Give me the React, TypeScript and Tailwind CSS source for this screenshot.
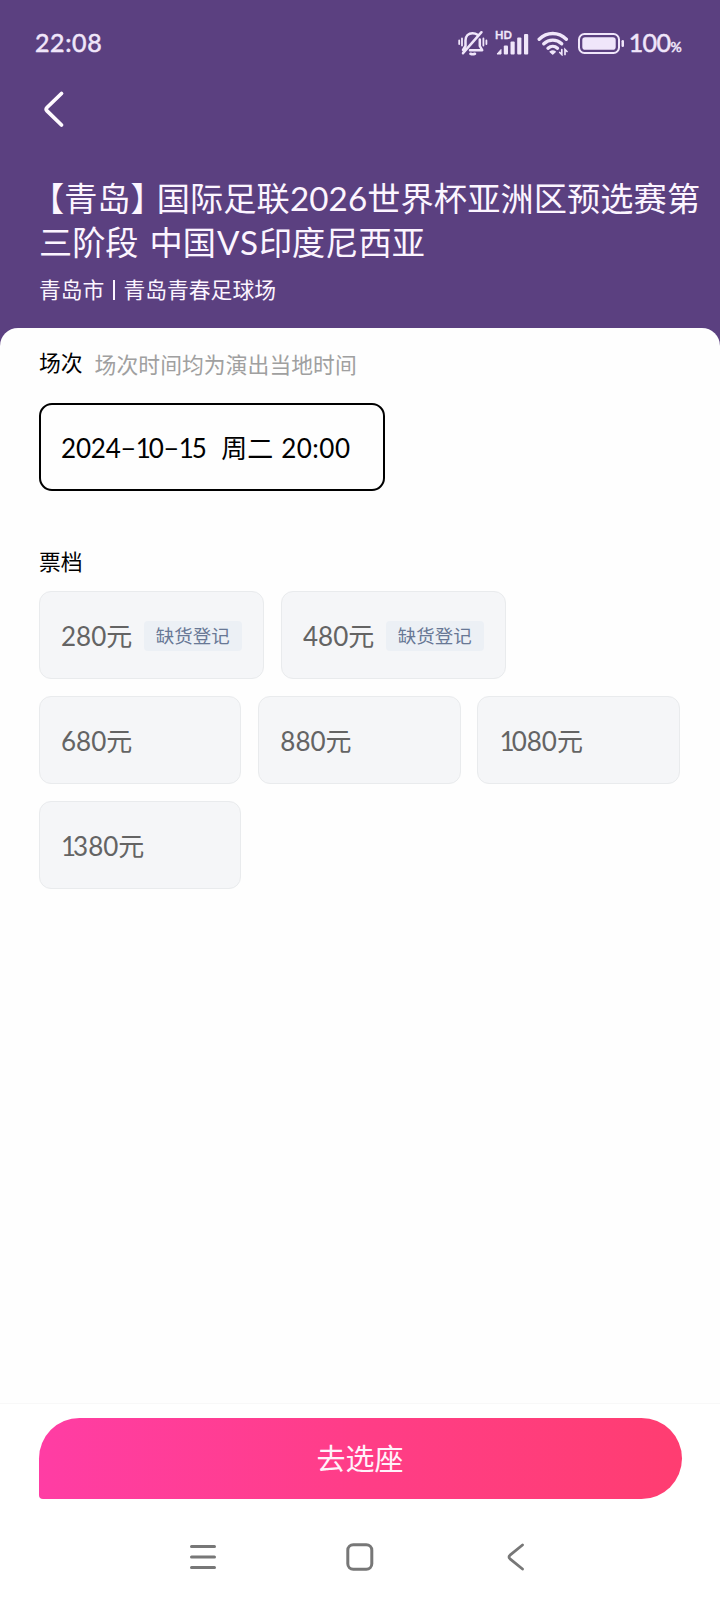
import React from "react";

type Tier = { price: string; soldOut?: boolean };

const rows: Tier[][] = [
  [
    { price: "280", soldOut: true },
    { price: "480", soldOut: true },
  ],
  [{ price: "680" }, { price: "880" }, { price: "1080" }],
  [{ price: "1380" }],
];

function MutedBell() {
  return (
    <svg width="30" height="26" viewBox="0 0 30 26" fill="none" stroke="#f0e6fa" strokeWidth="2.5" strokeLinecap="round" strokeLinejoin="round">
      <path d="M7.500 16V10.500C7.500 6 10.500 3.200 14.500 3.200c2 0 3.600.500 5 1.500M21.800 9.500v6.500l2.400 4.200H12M7.500 16l-2.500 4M5 23.200L23.500 2.200" />
      <path d="M12.500 23.800q2.200 1 4.400 0" strokeWidth="2.600" />
      <path d="M1.200 10.500v3.500M4 8.500v7M25.400 8.500v7M28.400 10.500v3.500" strokeWidth="1.800" />
    </svg>
  );
}

function Signal() {
  return (
    <svg className="overflow-visible" width="34" height="32" viewBox="0 -3 34 32" fill="#f0e6fa">
      <text x="0" y="9.300" fontSize="11" fontWeight="700" fontFamily="Lato, sans-serif" stroke="#f0e6fa" strokeWidth="0.300">HD</text>
      <path d="M2 24l4-4.500V24z" stroke="#f0e6fa" strokeLinejoin="round" />
      <rect x="8.800" y="15.500" width="4.200" height="9" rx="1" />
      <rect x="15.500" y="11.500" width="4.200" height="13" rx="1" />
      <rect x="22.200" y="7.500" width="4.200" height="17" rx="1" />
      <rect x="29" y="4" width="4.200" height="20.500" rx="1" />
    </svg>
  );
}

function Wifi() {
  return (
    <svg width="32" height="26" viewBox="0 0 32 26" fill="none" stroke="#f0e6fa" strokeWidth="3.400" strokeLinecap="round">
      <path d="M2.200 9.200C10 1.600 21.500 1.600 29.300 9.200" />
      <path d="M6.800 13.800C12 8.900 19.500 8.900 24.700 13.800" />
      <path d="M11 18.200c2.800-2.500 6.700-2.500 9.500 0" />
      <path d="M15.700 24l-2.500-2.200q2.500-1.800 5 0z" fill="#f0e6fa" strokeWidth="1.500" strokeLinejoin="round" />
      <path d="M24.800 19.500v5l-2-2M28 24.500v-5l2 2" strokeWidth="1.700" />
    </svg>
  );
}

function Battery() {
  return (
    <svg width="47" height="22" viewBox="0 0 47 22" fill="none">
      <rect x="1" y="1" width="40" height="19" rx="5.500" stroke="#f0e6fa" strokeWidth="2" />
      <rect x="4.300" y="4.300" width="33.400" height="12.400" rx="2.800" fill="#f0e6fa" />
      <rect x="43.500" y="7" width="2.500" height="7" rx="1.200" fill="#f0e6fa" />
    </svg>
  );
}

function TierCard({ price, soldOut }: Tier) {
  const narrowLead = price.startsWith("1");
  return (
    <button className={`flex h-[88px] shrink-0 items-center rounded-xl border border-[#e9ebed] bg-[#f5f6f8] pl-[21.500px] pt-[1px] text-[26px] text-[#646464] ${soldOut ? "w-[225.500px]" : "w-[202.800px]"}`}>
      <span className="whitespace-nowrap leading-[34px]">
        {narrowLead && <span className="tracking-[-3px]">1</span>}
        {narrowLead ? price.slice(1) : price}
        元
      </span>
      {soldOut && (
        <span className="ml-[11.500px] flex h-[30px] w-[98px] items-center justify-center rounded bg-[#ecf0f5] text-[18.500px] leading-[30px] text-[#687895]">
          缺货登记
        </span>
      )}
    </button>
  );
}

export default function App() {
  return (
    <div className="flex h-[1600px] w-[720px] flex-col overflow-hidden bg-[#5b4080] font-['Lato','Noto_Sans_CJK_SC',sans-serif]">
      <header className="h-[328px] shrink-0 text-[#fcf5ff]">
        <div className="flex h-[86px] items-center pl-[35px] pr-[39px] text-[#f0e6fa]">
          <span className="text-[25px] tracking-[0.600px] [-webkit-text-stroke:0.500px_#f0e6fa]">22:08</span>
          <div className="ml-auto flex items-center">
            <MutedBell />
            <div className="ml-[7px] flex"><Signal /></div>
            <div className="ml-[8px] flex"><Wifi /></div>
            <div className="ml-[9px] flex pt-px"><Battery /></div>
            <span className="ml-[4px] flex items-baseline text-[25px] tracking-[-0.600px] [-webkit-text-stroke:0.500px_#f0e6fa]">
              100<span className="text-[14px]">%</span>
            </span>
          </div>
        </div>
        <div className="flex h-[90px] pl-[43px] pt-[4px]">
          <svg width="22" height="38" viewBox="0 0 22 38" fill="none" stroke="#fffaff" strokeWidth="3.800" strokeLinecap="round" strokeLinejoin="round">
            <path d="M18.500 3.500L4 17.500q-1.700 1.700 0 3.400L18.500 35" />
          </svg>
        </div>
        <h1 className="whitespace-nowrap pl-[39px] text-[33.200px] leading-[44px]">
          <div className="flex">
            <span className="-ml-[8px]">【青岛】</span>
            <span className="-ml-[7px] tracking-[0.100px]">国际足联2026世界杯亚洲区预选赛第</span>
          </div>
          <div>三阶段<span className="ml-[11px]">中国</span><span className="ml-[1px] tracking-[1px]">VS</span>印度尼西亚</div>
        </h1>
        <p className="mt-[9px] flex h-[34px] items-center whitespace-nowrap pl-[39px] text-[21.800px]">
          青岛市<span className="mx-[8.500px] h-[20px] w-[2px] bg-[#fcf5ff]" />青岛青春足球场
        </p>
      </header>

      <main className="flex flex-1 flex-col rounded-t-[18px] bg-[#fefefe]">
        <section className="pl-[38.500px]">
          <div className="flex h-[75px] items-start whitespace-nowrap pl-[0.500px] pt-[19px] text-[21.800px] leading-[32px]">
            <h2 className="text-black">场次</h2>
            <span className="ml-[12px] mt-[2px] tracking-[0.050px] text-[#a0a0a0]">场次时间均为演出当地时间</span>
          </div>
          <button className="flex h-[88px] w-[346px] items-center whitespace-nowrap rounded-[13px] border-2 border-black pl-[20.500px] pt-[2px] text-[26px] text-black">
            <span className="tracking-[-0.150px]">2024−<span className="tracking-[-2px]">1</span>0−<span className="tracking-[-2px]">1</span>5</span>
            <span className="ml-[14.500px]">周二</span>
            <span className="ml-[8px] tracking-[0.500px]">20:00</span>
          </button>
        </section>

        <section className="mt-[55px] pl-[38.500px]">
          <h2 className="h-[45px] pl-[0.500px] text-[21.800px] leading-[32px] text-black">票档</h2>
          <div className="flex flex-col gap-[17px]">
            {rows.map((row, i) => (
              <div key={i} className="flex gap-[16.500px]">
                {row.map((tier) => (
                  <TierCard key={tier.price} {...tier} />
                ))}
              </div>
            ))}
          </div>
        </section>

        <footer className="mt-auto h-[197px] border-t border-[#f8f8f8] bg-white px-[38.500px] pt-[14px]">
          <button className="flex h-[81px] w-full items-center justify-center rounded-[40.500px] rounded-bl-[4px] bg-linear-to-r from-[#ff3da4] via-[#ff3d87] to-[#ff3d71] pt-px text-[29px] text-[#fff2fa]">
            去选座
          </button>
          <nav className="flex h-[115px] items-center pl-[151px]">
            <svg width="26" height="28" viewBox="0 0 26 28" stroke="#777" strokeWidth="3" strokeLinecap="round">
              <path d="M1.500 3.500h23M1.500 14h23M1.500 24.500h23" />
            </svg>
            <svg className="ml-[130px]" width="28" height="28" viewBox="0 0 28 28" fill="none" stroke="#777" strokeWidth="3">
              <rect x="1.800" y="1.800" width="24" height="24.400" rx="5.500" />
            </svg>
            <svg className="ml-[133px]" width="18" height="28" viewBox="0 0 18 28" fill="none" stroke="#777" strokeWidth="2.800" strokeLinecap="round" strokeLinejoin="round">
              <path d="M15.500 2L3 12.200q-2 1.800 0 3.600L15.500 26" />
            </svg>
          </nav>
        </footer>
      </main>
    </div>
  );
}
